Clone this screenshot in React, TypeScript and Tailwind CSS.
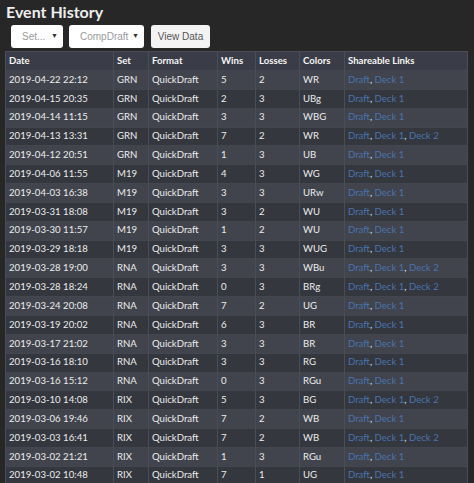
import React from "react";

type Row = [string, string, number, number, string, number];

const rows: Row[] = [
  ["2019-04-22 22:12", "GRN", 5, 2, "WR", 1],
  ["2019-04-15 20:35", "GRN", 2, 3, "UBg", 1],
  ["2019-04-14 11:15", "GRN", 3, 3, "WBG", 1],
  ["2019-04-13 13:31", "GRN", 7, 2, "WR", 2],
  ["2019-04-12 20:51", "GRN", 1, 3, "UB", 1],
  ["2019-04-06 11:55", "M19", 4, 3, "WG", 1],
  ["2019-04-03 16:38", "M19", 3, 3, "URw", 1],
  ["2019-03-31 18:08", "M19", 3, 2, "WU", 1],
  ["2019-03-30 11:57", "M19", 1, 2, "WU", 1],
  ["2019-03-29 18:18", "M19", 3, 3, "WUG", 1],
  ["2019-03-28 19:00", "RNA", 3, 3, "WBu", 2],
  ["2019-03-28 18:24", "RNA", 0, 3, "BRg", 2],
  ["2019-03-24 20:08", "RNA", 7, 2, "UG", 1],
  ["2019-03-19 20:02", "RNA", 6, 3, "BR", 1],
  ["2019-03-17 21:02", "RNA", 3, 3, "BR", 1],
  ["2019-03-16 18:10", "RNA", 3, 3, "RG", 1],
  ["2019-03-16 15:12", "RNA", 0, 3, "RGu", 1],
  ["2019-03-10 14:08", "RIX", 5, 3, "BG", 2],
  ["2019-03-06 19:46", "RIX", 7, 2, "WB", 1],
  ["2019-03-03 16:41", "RIX", 7, 2, "WB", 2],
  ["2019-03-02 21:21", "RIX", 1, 3, "RGu", 1],
  ["2019-03-02 10:48", "RIX", 7, 1, "UG", 1],
];

const cell = "border-r border-[#4a4d56] px-[3px] whitespace-nowrap";

function Links({ decks }: { decks: number }) {
  const items = ["Draft", "Deck 1", "Deck 2"].slice(0, decks + 1);
  return (
    <>
      {items.map((l, i) => (
        <React.Fragment key={l}>
          {i > 0 && <span className="text-[#e6e6e6]">, </span>}
          <a className="text-[#4b73ad]">{l}</a>
        </React.Fragment>
      ))}
    </>
  );
}

export default function App() {
  return (
    <div className="h-[483px] w-[474px] overflow-hidden bg-[#272727] font-['Lato',sans-serif] text-[#ececec]">
      <h1 className="pl-[6px] text-[16px] font-bold leading-[24px] text-[#eeeeee]">
        Event History
      </h1>
      <div className="mt-[1px] flex gap-[6px] pl-[11px] font-['Liberation_Sans',sans-serif]">
        <div className="flex h-[23px] w-[52px] items-center justify-between rounded-[3px] bg-white pl-[11px] pr-[5px] text-[10px] text-[#9a9a9a]">
          <span>Set...</span>
          <span className="text-[7px] text-[#333]">▼</span>
        </div>
        <div className="flex h-[23px] w-[75px] items-center justify-between rounded-[3px] bg-white pl-[11px] pr-[5px] text-[10px] text-[#9a9a9a]">
          <span>CompDraft</span>
          <span className="text-[7px] text-[#333]">▼</span>
        </div>
        <button className="ml-[1px] h-[23px] w-[59px] rounded-[3px] bg-[#f3f3f3] text-[10px] text-[#555]">
          View Data
        </button>
      </div>
      <table className="ml-[5px] mt-[3px] w-[463px] table-fixed border-collapse border border-[#4a4d56] text-[9.6px]">
        <colgroup>
          <col className="w-[108px]" />
          <col className="w-[35px]" />
          <col className="w-[69px]" />
          <col className="w-[38px]" />
          <col className="w-[44px]" />
          <col className="w-[45px]" />
          <col />
        </colgroup>
        <thead>
          <tr className="h-[19px] bg-[#3a3d47] text-left text-[#f4f4f4]">
            {["Date", "Set", "Format", "Wins", "Losses", "Colors", "Shareable Links"].map((h) => (
              <th key={h} className={cell + " font-bold"}>
                {h}
              </th>
            ))}
          </tr>
        </thead>
        <tbody>
          {rows.map((r, i) => (
            <tr
              key={r[0]}
              className={
                "h-[18.85px] border-t border-[#43464e] " +
                (i % 2 === 0 ? "bg-[#41444c]" : "bg-[#34373e]")
              }
            >
              <td className={cell}>{r[0]}</td>
              <td className={cell}>{r[1]}</td>
              <td className={cell}>QuickDraft</td>
              <td className={cell}>{r[2]}</td>
              <td className={cell}>{r[3]}</td>
              <td className={cell}>{r[4]}</td>
              <td className={cell}>
                <Links decks={r[5]} />
              </td>
            </tr>
          ))}
        </tbody>
      </table>
    </div>
  );
}
